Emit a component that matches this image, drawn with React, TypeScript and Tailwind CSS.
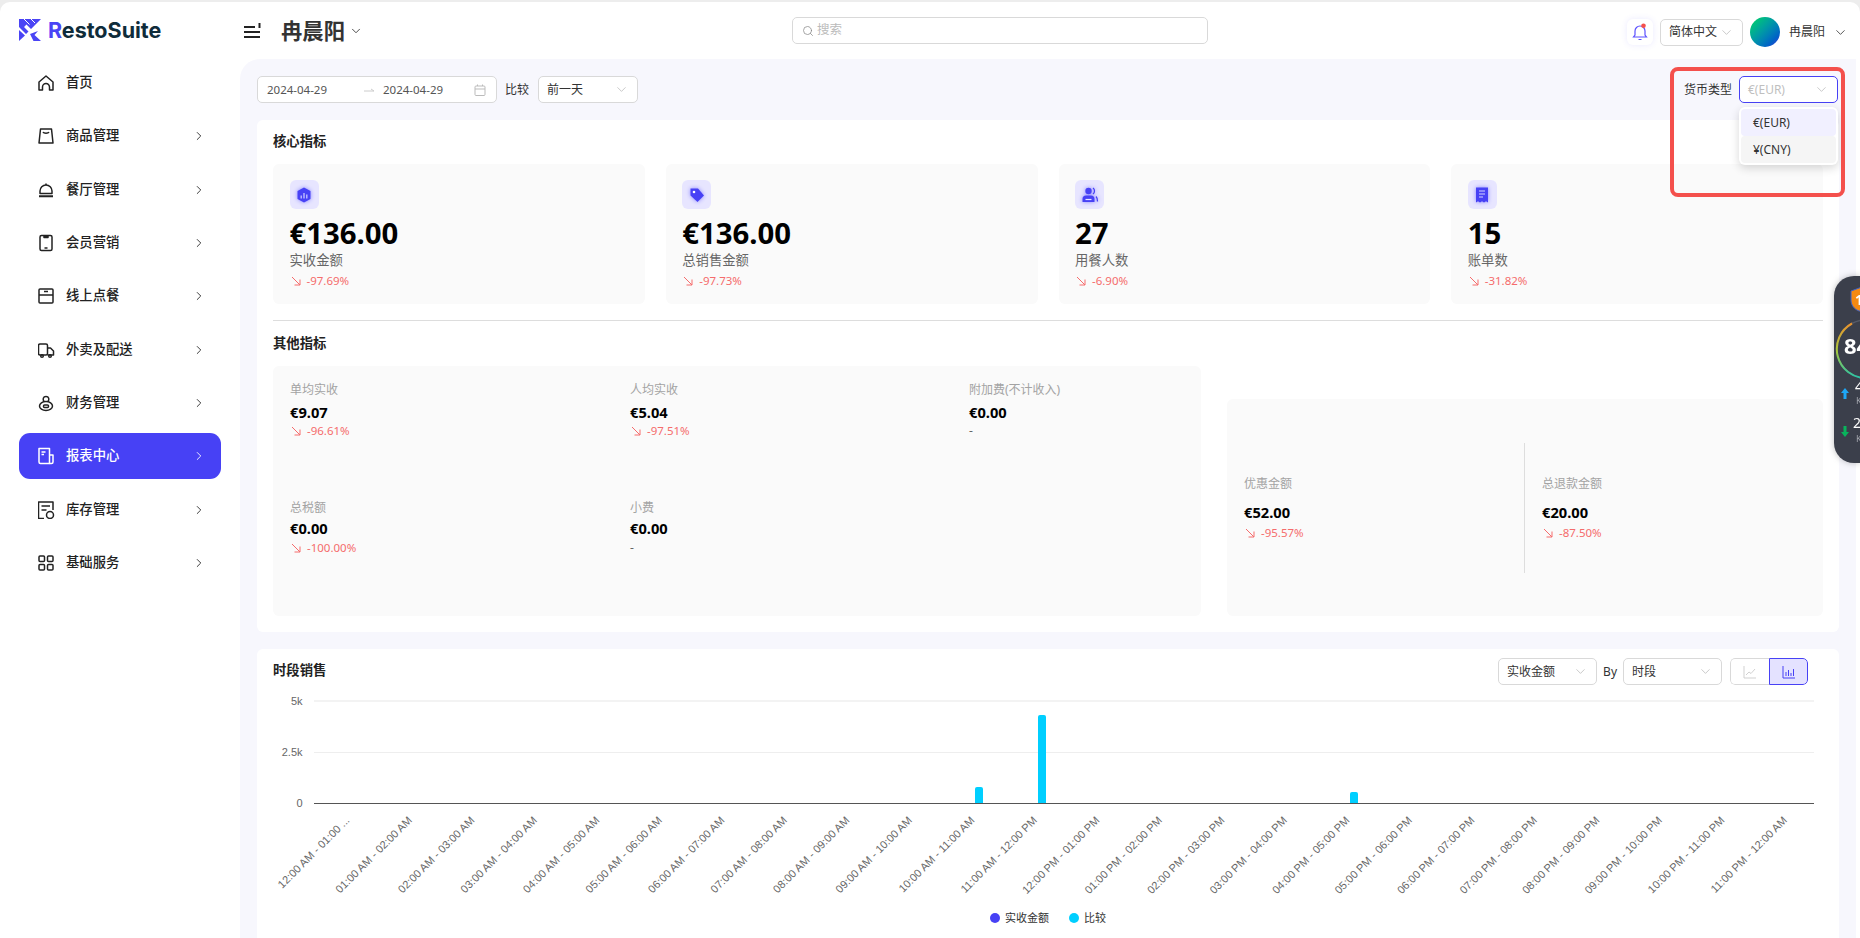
import type { ReactNode } from 'react';
import { ChevronDown, ChevronRight, Search } from 'lucide-react';

const FONT = '"Noto Sans", "Noto Sans CJK SC", sans-serif';

function NavIcon({ children }: { children: ReactNode }) {
  return (
    <svg width="18" height="18" viewBox="1 0 18 18" fill="none" stroke="currentColor" strokeWidth="1.5" strokeLinejoin="round" className="shrink-0">
      {children}
    </svg>
  );
}

const navItems: { label: string; icon: ReactNode; arrow?: boolean; active?: boolean }[] = [
  { label: '首页', icon: <path d="M2 8 9 2l7 6v8h-3.5v-3a3.500 3.500 0 0 0-7 0v3H2z" /> },
  { label: '商品管理', arrow: true, icon: <><path d="M3.500 2h11l1.500 14H2z" /><path d="M6 5c.8 1.600 5.200 1.600 6 0" /></> },
  { label: '餐厅管理', arrow: true, icon: <><path d="M3 12.500V10a6 6 0 0 1 12 0v2.500z" /><path d="M9 4V2.500" /><path d="M2 15.300h14" strokeWidth="2" /></> },
  { label: '会员营销', arrow: true, icon: <><rect x="3" y="1.500" width="12" height="15" rx="1.500" /><path d="M7 2h4v1.500H7zM7.500 14h3" /></> },
  { label: '线上点餐', arrow: true, icon: <><rect x="2" y="2" width="14" height="14" rx="1" /><path d="M2 8h14M7 4.500h4" /></> },
  { label: '外卖及配送', arrow: true, icon: <><rect x="1.500" y="3" width="9" height="11" rx="1.500" /><path d="M10.500 7h3l3 3v4h-6" /><circle cx="5" cy="15" r="1.300" /><circle cx="13" cy="15" r="1.300" /></> },
  { label: '财务管理', arrow: true, icon: <><ellipse cx="9" cy="12" rx="6.500" ry="4.500" /><path d="M7 7.500C5.500 5.500 6 2.500 9 2.500s3.500 3 2 5" /><rect x="6.500" y="11" width="5" height="2.500" rx="1" /></> },
  { label: '报表中心', arrow: true, active: true, icon: <><path d="M2 1.500h10.500v15H3.500A1.500 1.500 0 0 1 2 15z" /><path d="M12.500 8H16v7a1.500 1.500 0 0 1-1.500 1.500h-2" /><path d="M4.500 5h4M4.500 7.500h2.500" /></> },
  { label: '库存管理', arrow: true, icon: <><path d="M16 9V1H1.500v16.500H7" /><path d="M4.500 5h8.500M4.500 9h5" /><circle cx="13" cy="14" r="3.500" /></> },
  { label: '基础服务', arrow: true, icon: <><rect x="2" y="2" width="5.500" height="5.500" rx="1" /><rect x="10.500" y="2" width="5.500" height="5.500" rx="1" /><rect x="2" y="10.500" width="5.500" height="5.500" rx="1" /><rect x="10.500" y="10.500" width="5.500" height="5.500" rx="1" /></> },
];

function DownArrow() {
  return (
    <svg width="10" height="10" viewBox="0 0 10 10" fill="none" stroke="#f56c6c" strokeWidth="1" className="shrink-0">
      <path d="M1 1l8 8M9 3.500V9H3.500" />
    </svg>
  );
}

function Change({ value }: { value: string }) {
  return (
    <div className="flex h-4 items-center gap-[6px] pl-px text-[11.5px] leading-4 text-[#f56c6c]">
      <DownArrow />
      <span>{value}</span>
    </div>
  );
}

function Select({ value, width, muted, focused }: { value: string; width: string; muted?: boolean; focused?: boolean }) {
  return (
    <div
      className={`flex h-[27px] items-center justify-between rounded-[5px] border bg-white pr-2 pl-[8px] text-[12px] ${width} ${
        focused ? 'border-[#4741f5]' : 'border-[#d9d9d9]'
      } ${muted ? 'text-[#bfbfbf]' : 'text-[#333]'}`}
    >
      <span>{value}</span>
      <ChevronDown size={15} strokeWidth={1} className="text-[#aaa]" />
    </div>
  );
}

function TileIcon({ children }: { children: ReactNode }) {
  return (
    <div className="flex h-[29px] w-[29px] items-center justify-center rounded-[6px] bg-[#e7e5ff]">
      <svg width="18" height="18" viewBox="0 0 18 18" className="drop-shadow-[0_0_2px_#8a85ff]">
        {children}
      </svg>
    </div>
  );
}

const kpis: { value: string; label: string; change: string; icon: ReactNode }[] = [
  {
    value: '€136.00',
    label: '实收金额',
    change: '-97.69%',
    icon: (
      <>
        <path d="M9 1.500 15.500 5v8L9 16.500 2.500 13V5z" fill="#4741f5" />
        <path d="M6.200 9.500v3M9 7v5.500M11.800 8.500v4" stroke="#c9c6ff" strokeWidth="1.300" />
      </>
    ),
  },
  {
    value: '€136.00',
    label: '总销售金额',
    change: '-97.73%',
    icon: (
      <>
        <path d="M2.500 2.500h7.500l6 7-6.500 6.500-7-6.500z" fill="#4741f5" />
        <circle cx="6" cy="6" r="1.300" fill="#fff" />
      </>
    ),
  },
  {
    value: '27',
    label: '用餐人数',
    change: '-6.90%',
    icon: (
      <>
        <circle cx="7.500" cy="5" r="3.200" fill="#4741f5" />
        <path d="M1.500 16v-3a3.500 3.500 0 0 1 3.500-3.500h5a3.500 3.500 0 0 1 3.500 3.500v3z" fill="#4741f5" />
        <path d="M4.500 13.500h6" stroke="#e7e5ff" strokeWidth="1.200" />
        <path d="M12 2c2 1.500 2 4.500 0 6M15 10.500c1.200 1 1.500 3 1.500 5" stroke="#4741f5" strokeWidth="1.300" fill="none" />
      </>
    ),
  },
  {
    value: '15',
    label: '账单数',
    change: '-31.82%',
    icon: (
      <>
        <path d="M3 1.500h12v15l-2-1.300-2 1.300-2-1.300-2 1.300-2-1.300-2 1.300z" fill="#4741f5" />
        <path d="M6 5h6M6 8h6M6 11h4" stroke="#d5d3ff" strokeWidth="1.200" />
      </>
    ),
  },
];

function KpiCard({ value, label, change, icon }: (typeof kpis)[number]) {
  return (
    <div className="h-[140px] rounded-[6px] bg-[#fafafa] pt-4 pl-[16.5px]">
      <TileIcon>{icon}</TileIcon>
      <div className="mt-[7px] h-[35px] text-[29.33px] leading-[34px] font-bold text-black">{value}</div>
      <div className="h-[18px] text-[13.33px] leading-[18px] text-[#666]">{label}</div>
      <div className="mt-1">
        <Change value={change} />
      </div>
    </div>
  );
}

function Metric({ label, value, change, tight }: { label: string; value: string; change?: string; tight?: boolean }) {
  return (
    <div className="h-[117px]">
      <div className="h-[18px] text-[12px] leading-[18px] text-[#a3a3a3]">{label}</div>
      <div className={`h-5 text-[14.67px] leading-5 font-bold text-black ${tight ? 'mt-px' : 'mt-[3px]'}`}>{value}</div>
      <div className={tight ? 'mt-[2px]' : 'mt-px'}>
        {change ? <Change value={change} /> : <div className="h-4 text-[12px] leading-4 text-[#666]">-</div>}
      </div>
    </div>
  );
}

const hours = [
  '12:00 AM - 01:00 ...', '01:00 AM - 02:00 AM', '02:00 AM - 03:00 AM', '03:00 AM - 04:00 AM', '04:00 AM - 05:00 AM', '05:00 AM - 06:00 AM',
  '06:00 AM - 07:00 AM', '07:00 AM - 08:00 AM', '08:00 AM - 09:00 AM', '09:00 AM - 10:00 AM', '10:00 AM - 11:00 AM', '11:00 AM - 12:00 PM',
  '12:00 PM - 01:00 PM', '01:00 PM - 02:00 PM', '02:00 PM - 03:00 PM', '03:00 PM - 04:00 PM', '04:00 PM - 05:00 PM', '05:00 PM - 06:00 PM',
  '06:00 PM - 07:00 PM', '07:00 PM - 08:00 PM', '08:00 PM - 09:00 PM', '09:00 PM - 10:00 PM', '10:00 PM - 11:00 PM', '11:00 PM - 12:00 AM',
];

const bars = [
  { x: 979, top: 787 },
  { x: 1042, top: 715 },
  { x: 1354, top: 792 },
];

function SalesChart() {
  const axisFont = '"Liberation Sans", Arial, sans-serif';
  return (
    <svg width="1582" height="218" viewBox="257 690 1582 218" className="block">
      <line x1="314" x2="1814" y1="701" y2="701" stroke="#f3f3f3" strokeWidth="2" />
      <line x1="314" x2="1814" y1="752.500" y2="752.500" stroke="#eeeeee" />
      {bars.map((bar) => (
        <path key={bar.x} d={`M${bar.x - 4} 803V${bar.top + 2}a2 2 0 0 1 2-2h4a2 2 0 0 1 2 2V803z`} fill="#00cfff" />
      ))}
      <line x1="314" x2="1814" y1="803.500" y2="803.500" stroke="#555" />
      {[
        ['5k', 701],
        ['2.5k', 752],
        ['0', 803],
      ].map(([text, y]) => (
        <text key={text} x="302.500" y={Number(y) + 4} textAnchor="end" fontSize="11" fill="#666" fontFamily={axisFont}>
          {text}
        </text>
      ))}
      {hours.map((hour, i) => {
        const x = 314 + 62.5 * (i + 0.5) + 5;
        return (
          <text key={hour} x={x} y="821" textAnchor="end" fontSize="11" fill="#666" fontFamily={axisFont} transform={`rotate(-45 ${x} 821)`}>
            {hour}
          </text>
        );
      })}
    </svg>
  );
}

function FloatingWidget() {
  return (
    <svg width="26" height="187" viewBox="1834 276 26 187" className="absolute top-[276px] right-0 drop-shadow-[0_0_3px_rgba(0,0,0,0.25)]">
      <defs>
        <linearGradient id="ring" x1="0" y1="0" x2="0" y2="1">
          <stop offset="0" stopColor="#e8912d" />
          <stop offset="0.5" stopColor="#a8c83c" />
          <stop offset="1" stopColor="#28c4a8" />
        </linearGradient>
      </defs>
      <path d="M1860 276h-6a20 20 0 0 0-20 20v147a20 20 0 0 0 20 20h6z" fill="#3b3f4b" />
      <path d="M1851 291l11-4v24h-3c-5-2-8-6-8-11z" fill="#f58a13" stroke="#3d63c9" strokeWidth="1" />
      <text x="1855" y="305" fontSize="14" fontWeight="700" fill="#fff" fontFamily={FONT}>1</text>
      <circle cx="1866" cy="349" r="29" fill="none" stroke="#565a66" strokeWidth="1.500" />
      <path d="M1852 323.500A29 29 0 0 0 1866 378" fill="none" stroke="url(#ring)" strokeWidth="2" />
      <text x="1844" y="354" fontSize="22" fontWeight="700" fill="#fff" fontFamily={FONT}>84</text>
      <path d="M1845 388l4 5h-2.500v6h-3v-6H1841z" fill="#1ea7f5" />
      <text x="1855" y="392" fontSize="14" fill="#fff" fontFamily={FONT}>4</text>
      <text x="1856" y="404" fontSize="9" fill="#a0a3ab" fontFamily={FONT}>K</text>
      <path d="M1845 437l4-5h-2.500v-6h-3v6H1841z" fill="#08b35c" />
      <text x="1853" y="428" fontSize="14" fill="#fff" fontFamily={FONT}>2</text>
      <text x="1856" y="442" fontSize="9" fill="#a0a3ab" fontFamily={FONT}>K</text>
    </svg>
  );
}

export default function App() {
  return (
    <div className="relative h-[938px] w-[1860px] overflow-hidden bg-[#ededed] pt-[2px] text-[#333]" style={{ fontFamily: FONT }}>
      <div className="flex h-[936px] overflow-hidden rounded-t-[10px] bg-white">
        <aside className="w-[240px] shrink-0">
          <div className="flex h-[58px] items-start pt-[16px] pl-[19px]">
            <svg width="22" height="22" viewBox="0 0 22 22" className="mt-px shrink-0">
              <path d="M0 0h22L12 10 7.500 5.500 5 8l4.500 4.500L7 15 0 8z" fill="#4a44f5" />
              <path d="M5 0l5.500 5.500M12 0l4 4" stroke="#fff" strokeWidth="1" />
              <path d="M0 11l6 5.500L0 22z" fill="#4a44f5" />
              <path d="M11 15l8-3-3.500 4L22 22h-7.500z" fill="#4a44f5" />
            </svg>
            <span className="ml-[7px] text-[21.5px] leading-[24px] font-bold text-[#0f2c3a]" style={{ fontFamily: 'Inter, sans-serif' }}>
              <span className="text-[#4a44f5]">R</span>estoSuite
            </span>
          </div>
          <nav className="flex flex-col gap-[7.33px] pr-[19px] pl-[19px]">
            {navItems.map((item) => (
              <div
                key={item.label}
                className={`flex h-[46px] items-center rounded-[11px] pr-[15px] pl-[19px] text-[13.33px] font-medium ${
                  item.active ? 'bg-[#4741f5] text-white' : 'text-[#222]'
                }`}
              >
                <NavIcon>{item.icon}</NavIcon>
                <span className="ml-[10px]">{item.label}</span>
                {item.arrow && <ChevronRight size={14} strokeWidth={1.5} className="ml-auto" />}
              </div>
            ))}
          </nav>
        </aside>

        <div className="flex min-w-0 flex-1 flex-col">
          <header className="flex h-[57px] shrink-0 items-start pt-[15px]">
            <div className="flex h-[27px] w-[552px] items-center pl-[4px]">
              <svg width="17" height="15" viewBox="0 0 17 15" fill="none" stroke="#222" strokeWidth="2" className="shrink-0">
                <path d="M0 4h11M0 9h16M0 14h16" />
                <path d="M15.500 0v5" />
              </svg>
              <span className="ml-5 text-[21.33px] leading-7 font-bold text-[#333]">冉晨阳</span>
              <ChevronDown size={14} strokeWidth={1.5} className="mt-px ml-[4px] text-[#333]" />
            </div>
            <div className="flex h-[27px] w-[416px] items-center gap-[3px] rounded-[5px] border border-[#d9d9d9] pl-[9px] text-[12.5px] text-[#bbb]">
              <Search size={12} strokeWidth={1.5} className="text-[#888]" />
              <span>搜索</span>
            </div>
            <div className="ml-auto flex items-center pr-[12px]">
              <div className="flex h-[26px] w-[26px] items-center justify-center rounded-[6px] bg-white shadow-[0_0_6px_rgba(90,80,255,0.12)]">
                <svg width="16" height="18" viewBox="0 0 16 18" fill="none" stroke="#5b50ff" strokeWidth="1.200">
                  <path d="M3 12V8a5 5 0 0 1 10 0v4l1.500 2h-13zM6.500 16.500h3" />
                  <circle cx="11.500" cy="2.800" r="2.300" fill="#f4504c" stroke="none" />
                </svg>
              </div>
              <div className="ml-[7px]">
                <Select value="简体中文" width="w-[83px]" />
              </div>
              <div className="ml-[7px] h-[30px] w-[30px] rounded-full bg-linear-to-br from-[#0fd850] to-[#2b22d9]" />
              <span className="ml-[9px] text-[12px]">冉晨阳</span>
              <ChevronDown size={15} strokeWidth={1.3} className="ml-[8px] text-[#333]" />
            </div>
          </header>

          <div className="flex min-h-0 flex-1 bg-white">
            <main className="h-full w-[1616px] rounded-tl-[20px] bg-[#f7f7fd] px-[17px] pt-[17px]">
              <div className="flex h-[27px] items-center">
                <div className="flex h-[27px] w-[240px] items-center rounded-[5px] border border-[#d9d9d9] bg-white pl-[9px] text-[11.5px] text-[#555]">
                  <span>2024-04-29</span>
                  <svg width="12" height="8" viewBox="0 0 12 8" fill="none" stroke="#ccc" className="ml-[36px]">
                    <path d="M1 5h10L8 3" />
                  </svg>
                  <span className="ml-[8px]">2024-04-29</span>
                  <svg width="12" height="12" viewBox="0 0 12 12" fill="none" stroke="#bbb" className="ml-[31px]">
                    <rect x="1" y="2" width="10" height="9.500" rx="1" />
                    <path d="M1 5h10M3.500 .5V2M8.500 .5V2" />
                  </svg>
                </div>
                <span className="ml-2 text-[12px]">比较</span>
                <div className="ml-[9px]">
                  <Select value="前一天" width="w-[100px]" />
                </div>
                <span className="ml-auto text-[12px] text-[#333]">货币类型</span>
                <div className="mr-px ml-[7px]">
                  <Select value="€(EUR)" width="w-[99px]" muted focused />
                </div>
              </div>

              <section className="mt-[17px] h-[512px] rounded-[6px] bg-white px-4">
                <h2 className="flex h-[44px] items-center text-[13.33px] font-bold text-[#222]">核心指标</h2>
                <div className="grid grid-cols-4 gap-[21px]">
                  {kpis.map((kpi) => (
                    <KpiCard key={kpi.label} {...kpi} />
                  ))}
                </div>
                <div className="mt-4 border-t border-[#dddddd]" />
                <h2 className="flex h-[45px] items-center text-[13.33px] font-bold text-[#222]">其他指标</h2>
                <div className="flex gap-[26px]">
                  <div className="grid h-[250px] w-[928px] grid-cols-[340px_339px_1fr] rounded-[6px] bg-[#fafafa] pt-[15px] pl-[17px]">
                    <Metric label="单均实收" value="€9.07" change="-96.61%" />
                    <Metric label="人均实收" value="€5.04" change="-97.51%" />
                    <Metric label="附加费(不计收入)" value="€0.00" />
                    <Metric label="总税额" value="€0.00" change="-100.00%" tight />
                    <Metric label="小费" value="€0.00" tight />
                  </div>
                  <div className="mt-[33px] flex h-[217px] flex-1 items-center rounded-[6px] bg-[#fafafa]">
                    <div className="w-[297px] pl-[17px]">
                      <div className="text-[12px] leading-[18px] text-[#a3a3a3]">优惠金额</div>
                      <div className="mt-[9px] text-[14.67px] leading-5 font-bold text-black">€52.00</div>
                      <div className="mt-[3px]">
                        <Change value="-95.57%" />
                      </div>
                    </div>
                    <div className="flex h-[130px] flex-1 flex-col justify-center border-l border-[#dddddd] pl-[17px]">
                      <div className="text-[12px] leading-[18px] text-[#a3a3a3]">总退款金额</div>
                      <div className="mt-[9px] text-[14.67px] leading-5 font-bold text-black">€20.00</div>
                      <div className="mt-[3px]">
                        <Change value="-87.50%" />
                      </div>
                    </div>
                  </div>
                </div>
              </section>

              <section className="mt-[17px] h-[300px] rounded-[6px] bg-white">
                <div className="flex h-[41px] items-start pt-[9px] pr-[31px] pl-4">
                  <h2 className="flex h-[26px] items-center text-[13.33px] font-bold text-[#222]">时段销售</h2>
                  <div className="ml-auto flex items-center">
                    <Select value="实收金额" width="w-[99px]" />
                    <span className="mx-[6px] text-[12px]">By</span>
                    <Select value="时段" width="w-[99px]" />
                    <div className="ml-2 flex h-[27px] w-[78px] overflow-hidden rounded-[5px]">
                      <div className="flex w-[39px] items-center justify-center rounded-l-[5px] border border-r-0 border-[#d9d9d9]">
                        <svg width="14" height="14" viewBox="0 0 14 14" fill="none" stroke="#ccc" strokeWidth="0.900">
                          <path d="M1 1v12h12M3 10l3-3 2 1.500L12 4" />
                        </svg>
                      </div>
                      <div className="flex flex-1 items-center justify-center rounded-r-[5px] border border-[#4741f5] bg-[#e4e2ff]">
                        <svg width="14" height="14" viewBox="0 0 14 14" fill="none" stroke="#4741f5" strokeWidth="1">
                          <path d="M1 1v12h12M4 11V7M6.500 11V5M9 11V8M11.500 11V4" />
                        </svg>
                      </div>
                    </div>
                  </div>
                </div>
                <SalesChart />
                <div className="mt-px flex h-[18px] items-center justify-center text-[11px] text-[#333]">
                  <span className="h-[10px] w-[10px] rounded-full bg-[#4741f5]" />
                  <span className="ml-[5px]">实收金额</span>
                  <span className="ml-5 h-[10px] w-[10px] rounded-full bg-[#00cfff]" />
                  <span className="ml-[5px]">比较</span>
                </div>
              </section>
            </main>
          </div>
        </div>
      </div>

      {/* currency dropdown, open */}
      <div className="absolute top-[107px] left-[1739px] w-[99px] rounded-[6px] bg-white p-[2px] text-[12px] text-[#333] shadow-[0_3px_10px_rgba(0,0,0,0.16)]">
        <div className="flex h-[27px] items-center rounded-[4px] bg-[#f1f0ff] pt-px pl-3">€(EUR)</div>
        <div className="flex h-[27px] items-center rounded-[4px] bg-[#f5f5f5] pl-3">¥(CNY)</div>
      </div>

      {/* red annotation box from the screenshot */}
      <div className="pointer-events-none absolute top-[67px] left-[1670px] h-[130px] w-[175px] rounded-[8px] border-4 border-[#f4504c]" />

      <FloatingWidget />
    </div>
  );
}
